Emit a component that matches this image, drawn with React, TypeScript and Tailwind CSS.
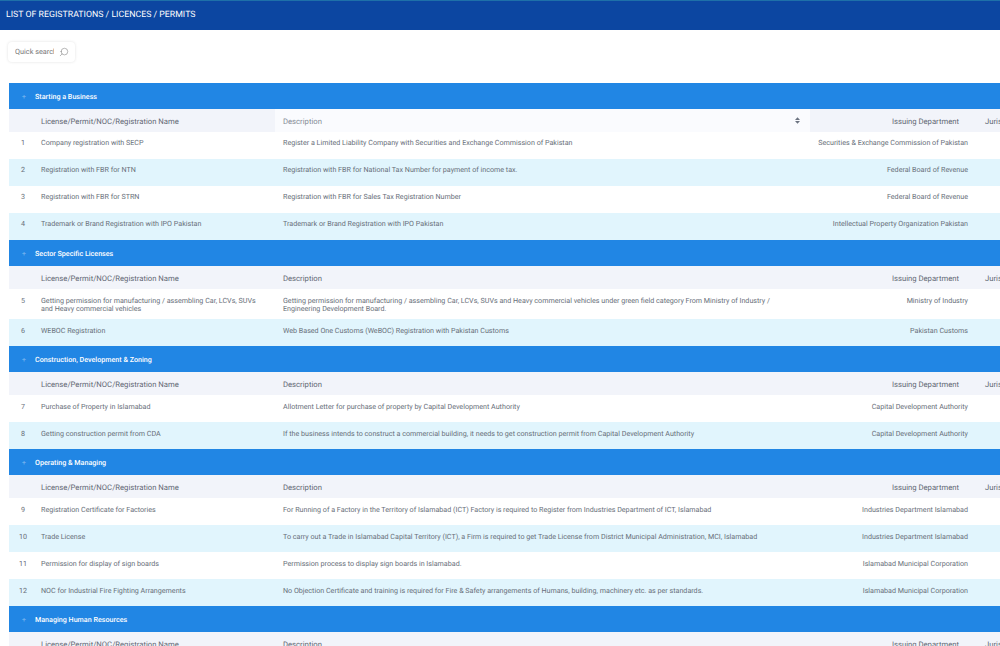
import React from "react";
import { Search } from "lucide-react";

type Row = { no: number; name: string; desc: string; dept: string };
type Group = { title: string; rows: Row[] };

const groups: Group[] = [
  {
    title: "Starting a Business",
    rows: [
      { no: 1, name: "Company registration with SECP", desc: "Register a Limited Liability Company with Securities and Exchange Commission of Pakistan", dept: "Securities & Exchange Commission of Pakistan" },
      { no: 2, name: "Registration with FBR for NTN", desc: "Registration with FBR for National Tax Number for payment of income tax.", dept: "Federal Board of Revenue" },
      { no: 3, name: "Registration with FBR for STRN", desc: "Registration with FBR for Sales Tax Registration Number", dept: "Federal Board of Revenue" },
      { no: 4, name: "Trademark or Brand Registration with IPO Pakistan", desc: "Trademark or Brand Registration with IPO Pakistan", dept: "Intellectual Property Organization Pakistan" },
    ],
  },
  {
    title: "Sector Specific Licenses",
    rows: [
      { no: 5, name: "Getting permission for manufacturing / assembling Car, LCVs, SUVs and Heavy commercial vehicles", desc: "Getting permission for manufacturing / assembling Car, LCVs, SUVs and Heavy commercial vehicles under green field category From Ministry of Industry / Engineering Development Board.", dept: "Ministry of Industry" },
      { no: 6, name: "WEBOC Registration", desc: "Web Based One Customs (WeBOC) Registration with Pakistan Customs", dept: "Pakistan Customs" },
    ],
  },
  {
    title: "Construction, Development & Zoning",
    rows: [
      { no: 7, name: "Purchase of Property in Islamabad", desc: "Allotment Letter for purchase of property by Capital Development Authority", dept: "Capital Development Authority" },
      { no: 8, name: "Getting construction permit from CDA", desc: "If the business intends to construct a commercial building, it needs to get construction permit from Capital Development Authority", dept: "Capital Development Authority" },
    ],
  },
  {
    title: "Operating & Managing",
    rows: [
      { no: 9, name: "Registration Certificate for Factories", desc: "For Running of a Factory in the Territory of Islamabad (ICT) Factory is required to Register from Industries Department of ICT, Islamabad", dept: "Industries Department Islamabad" },
      { no: 10, name: "Trade License", desc: "To carry out a Trade in Islamabad Capital Territory (ICT), a Firm is required to get Trade License from District Municipal Administration, MCI, Islamabad", dept: "Industries Department Islamabad" },
      { no: 11, name: "Permission for display of sign boards", desc: "Permission process to display sign boards in Islamabad.", dept: "Islamabad Municipal Corporation" },
      { no: 12, name: "NOC for Industrial Fire Fighting Arrangements", desc: "No Objection Certificate and training is required for Fire & Safety arrangements of Humans, building, machinery etc. as per standards.", dept: "Islamabad Municipal Corporation" },
    ],
  },
  { title: "Managing Human Resources", rows: [] },
];

function SortIcon() {
  return (
    <svg width="5" height="7" viewBox="0 0 6 8" className="absolute right-[10px] top-[8px]">
      <path d="M3 0 L6 3.4 H0 Z" fill="#6b7280" />
      <path d="M3 8 L6 4.6 H0 Z" fill="#6b7280" />
    </svg>
  );
}

function GroupRows({ group, first }: { group: Group; first: boolean }) {
  const cellPad = first ? "pt-[7px] pb-[7px]" : "pt-[8px] pb-[6px]";
  return (
    <>
      <tr className="h-[26px] bg-[#1f85e4]">
        <td colSpan={5} className="p-0">
          <div className="flex items-center pt-[2px] text-[7.15px] font-medium text-white">
            <span className="ml-[13px] mr-[9px] mt-[1px] w-[4px] text-center text-[7px] text-[#6fb0ee]">+</span>
            {group.title}
          </div>
        </td>
      </tr>
      <tr className="h-[23px] bg-[#f2f4fa] text-[7.7px] text-[#5f6672]">
        <th className="font-normal"></th>
        <th className="pl-2 pt-[2px] text-left font-normal">License/Permit/NOC/Registration Name</th>
        <th className={`relative pl-2 pt-[2px] text-left font-normal ${first ? "bg-[#fafbfe] text-[#858b96]" : ""}`}>
          Description
          {first && <SortIcon />}
        </th>
        <th className="pr-[17px] pt-[2px] text-right font-normal">Issuing Department</th>
        <th className="pl-[9px] pt-[2px] text-left font-normal">Jurisdiction</th>
      </tr>
      {group.rows.map((row) => (
        <tr key={row.no} className={`h-[27px] text-[7.15px] leading-[8px] text-[#666d78] ${row.no % 2 === 0 ? "bg-[#e1f5fd]" : "bg-white"}`}>
          <td className={`pl-[4px] text-center align-top ${cellPad}`}>{row.no}</td>
          <td className={`pl-2 pr-4 align-top ${cellPad}`}>{row.name}</td>
          <td className={`pl-2 pr-8 align-top ${cellPad}`}>{row.desc}</td>
          <td className={`pr-2 text-right align-top whitespace-nowrap ${cellPad}`}>{row.dept}</td>
          <td></td>
        </tr>
      ))}
    </>
  );
}

export default function App() {
  return (
    <div className="h-[646px] w-[1000px] overflow-hidden bg-white font-['Roboto',sans-serif] opacity-[0.99] [text-rendering:geometricPrecision]">
      <div className="flex h-[30px] items-center border-t border-[#1c6fa8] bg-[#0a44a0] px-[6px] text-[8.77px] text-white">
        LIST OF REGISTRATIONS / LICENCES / PERMITS
      </div>
      <div className="pl-[8px] pt-[12px]">
        <div className="flex h-[20px] w-[67px] items-center overflow-hidden rounded-sm pl-[7px] text-[7.3px] text-[#777] shadow-[0_0_3px_rgba(0,0,0,0.12)]">
          <span className="w-[39px] overflow-hidden whitespace-nowrap">Quick search</span>
          <Search size={10} strokeWidth={1.25} className="ml-[5px] -scale-x-100 text-[#777]" />
        </div>
      </div>
      <div className="pl-[9px] pt-[21px]">
        <table className="w-[1040px] table-fixed border-collapse">
          <colgroup>
            <col className="w-[24px]" />
            <col className="w-[242px]" />
            <col className="w-[535px]" />
            <col className="w-[166px]" />
            <col />
          </colgroup>
          <tbody>
            {groups.map((group, i) => (
              <GroupRows key={group.title} group={group} first={i === 0} />
            ))}
          </tbody>
        </table>
      </div>
    </div>
  );
}
